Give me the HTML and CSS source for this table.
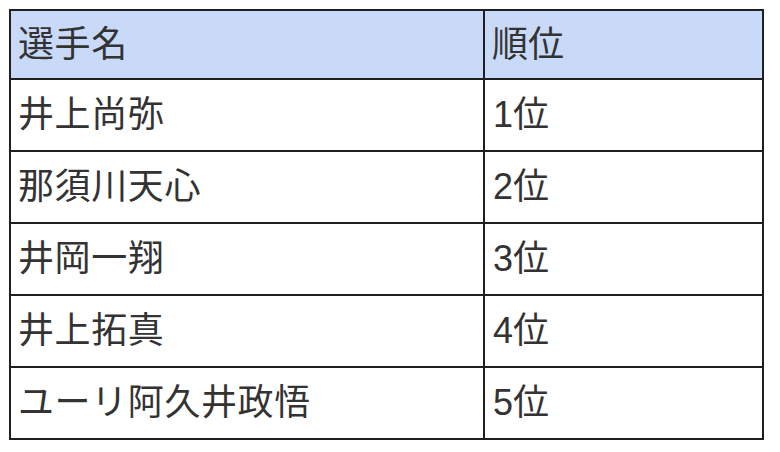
FILE: index.html
```html
<!DOCTYPE html>
<html lang="ja">
<head>
<meta charset="utf-8">
<title>順位表</title>
<link rel="stylesheet" href="styles.css">
</head>
<body>
<table class="rank-table">
  <thead>
    <tr class="head-row"><th class="col-name">選手名</th><th class="col-rank">順位</th></tr>
  </thead>
  <tbody>
    <tr><td>井上尚弥</td><td><span class="num">1</span>位</td></tr>
    <tr><td>那須川天心</td><td><span class="num">2</span>位</td></tr>
    <tr><td>井岡一翔</td><td><span class="num">3</span>位</td></tr>
    <tr><td>井上拓真</td><td><span class="num">4</span>位</td></tr>
    <tr><td>ユーリ阿久井政悟</td><td><span class="num">5</span>位</td></tr>
  </tbody>
</table>
</body>
</html>
```
FILE: styles.css
```css
html, body {
  margin: 0;
  padding: 0;
  background: #ffffff;
}
body {
  padding: 9px 0 0 9px;
}
.rank-table {
  border-collapse: collapse;
  font-family: "Liberation Sans", "Noto Sans CJK JP", sans-serif;
  font-size: 36px;
  color: #333333;
  table-layout: fixed;
  width: 753px;
}
.rank-table th,
.rank-table td {
  border: 2px solid #1f1f1f;
  padding: 0 0 0 7px;
  text-align: left;
  font-weight: normal;
  vertical-align: middle;
  height: 72px;
  box-sizing: border-box;
  line-height: 1;
}
.rank-table td:first-child,
.rank-table th:first-child {
  letter-spacing: 0.6px;
}
.head-row th {
  background: #c9daf8;
  height: 69px;
}
.col-name { width: 474px; }
.col-rank { width: 279px; }
.rank-table td + td { padding-left: 8px; }
```
